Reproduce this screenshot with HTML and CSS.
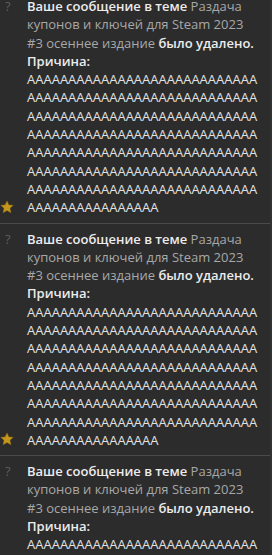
FILE: index.html
```html
<!DOCTYPE html>
<html lang="ru">
<head>
<meta charset="utf-8">
<link rel="stylesheet" href="styles.css">
</head>
<body>
<div class="feed">
  <div class="item">
    <div class="side">
      <span class="q">?</span>
      <svg class="star" viewBox="0 0 24 24" width="14" height="14"><path d="M12 1.5l3.2 6.9 7.4.8-5.5 5.1 1.5 7.4L12 17.9l-6.6 3.8 1.5-7.4L1.4 9.2l7.4-.8z"/></svg>
    </div>
    <div class="body">
      <p class="head"><b>Ваше сообщение в теме</b> Раздача купонов и ключей для Steam 2023 #3 осеннее издание <b>было удалено.</b></p>
      <p class="label">Причина:</p>
      <p class="reason">AAAAAAAAAAAAAAAAAAAAAAAAAAAAAAAAAAAAAAAAAAAAAAAAAAAAAAAAAAAAAAAAAAAAAAAAAAAAAAAAAAAAAAAAAAAAAAAAAAAAAAAAAAAAAAAAAAAAAAAAAAAAAAAAAAAAAAAAAAAAAAAAAAAAAAAAAAAAAAAAAAAAAAAAAAAAAAAAAAAAAAAAAAAAAAAAAAAAAAAAAAAAAAAAAAAA</p>
    </div>
  </div>
  <div class="item">
    <div class="side">
      <span class="q">?</span>
      <svg class="star" viewBox="0 0 24 24" width="14" height="14"><path d="M12 1.5l3.2 6.9 7.4.8-5.5 5.1 1.5 7.4L12 17.9l-6.6 3.8 1.5-7.4L1.4 9.2l7.4-.8z"/></svg>
    </div>
    <div class="body">
      <p class="head"><b>Ваше сообщение в теме</b> Раздача купонов и ключей для Steam 2023 #3 осеннее издание <b>было удалено.</b></p>
      <p class="label">Причина:</p>
      <p class="reason">AAAAAAAAAAAAAAAAAAAAAAAAAAAAAAAAAAAAAAAAAAAAAAAAAAAAAAAAAAAAAAAAAAAAAAAAAAAAAAAAAAAAAAAAAAAAAAAAAAAAAAAAAAAAAAAAAAAAAAAAAAAAAAAAAAAAAAAAAAAAAAAAAAAAAAAAAAAAAAAAAAAAAAAAAAAAAAAAAAAAAAAAAAAAAAAAAAAAAAAAAAAAAAAAAAAA</p>
    </div>
  </div>
  <div class="item">
    <div class="side">
      <span class="q">?</span>
      <svg class="star" viewBox="0 0 24 24" width="14" height="14"><path d="M12 1.5l3.2 6.9 7.4.8-5.5 5.1 1.5 7.4L12 17.9l-6.6 3.8 1.5-7.4L1.4 9.2l7.4-.8z"/></svg>
    </div>
    <div class="body">
      <p class="head"><b>Ваше сообщение в теме</b> Раздача купонов и ключей для Steam 2023 #3 осеннее издание <b>было удалено.</b></p>
      <p class="label">Причина:</p>
      <p class="reason">AAAAAAAAAAAAAAAAAAAAAAAAAAAAAAAAAAAAAAAAAAAAAAAAAAAAAAAAAAAAAAAAAAAAAAAAAAAAAAAAAAAAAAAAAAAAAAAAAAAAAAAAAAAAAAAAAAAAAAAAAAAAAAAAAAAAAAAAAAAAAAAAAAAAAAAAAAAAAAAAAAAAAAAAAAAAAAAAAAAAAAAAAAAAAAAAAAAAAAAAAAAAAAAAAAAA</p>
    </div>
  </div>
</div>
</body>
</html>
```
FILE: styles.css
```css
html, body {
  margin: 0;
  padding: 0;
  height: 555px;
  overflow: hidden;
  background: #2c2c2c;
}
body {
  font-family: "Open Sans", "Liberation Sans", sans-serif;
  font-size: 13px;
  line-height: 18.3px;
  color: #a8a8a8;
}
.feed {
  margin-top: -9px;
  border-right: 2px solid #323232;
}
.item {
  display: flex;
  padding: 6px 8px 6px 0;
  border-bottom: 1px solid #4a4a4a;
}
.side {
  width: 27px;
  flex: none;
  display: flex;
  flex-direction: column;
  justify-content: space-between;
  align-items: flex-start;
}
.q {
  margin-left: 5px;
  font-size: 13px;
  color: #5c5c5c;
}
.star {
  margin-bottom: 3px;
  fill: #c6961c;
  stroke: #9a7316;
  stroke-width: 0.8;
}
.body {
  width: 236px;
}
.body p {
  margin: 0;
}
.head b, .label {
  font-weight: 600;
  color: #ececec;
}
.reason {
  color: #e2e2e2;
  overflow-wrap: anywhere;
  word-break: break-all;
}
```
